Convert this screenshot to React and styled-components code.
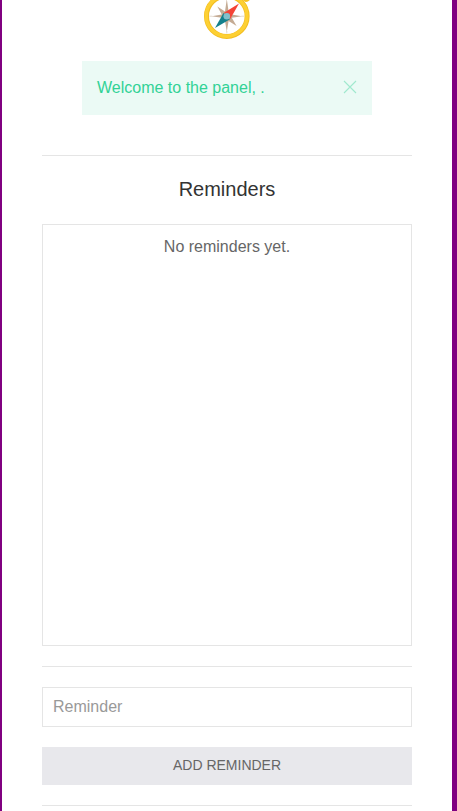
import React from "react";
import styled, { createGlobalStyle } from "styled-components";

const GlobalStyle = createGlobalStyle`
  *, *::before, *::after { box-sizing: border-box; }
  html, body { margin: 0; overflow: hidden; background: #fff; }
  body {
    font: 16px/1.5 "Liberation Sans", Arial, sans-serif;
    color: #666;
  }
`;

const Page = styled.main`
  height: 811px;
  overflow: hidden;
  padding: 0 40px;
  border: solid purple;
  border-width: 0 5px 0 2px;
  background: #fff;
`;

const Logo = styled.div`
  height: 61px;
  display: flex;
  justify-content: center;
  svg { display: block; flex: none; }
`;

const Alert = styled.div`
  display: flex;
  justify-content: space-between;
  align-items: flex-start;
  margin: 0 40px 40px;
  padding: 15px;
  background: #ebfaf5;
  color: #32d296;
`;

const CloseButton = styled.button`
  display: block;
  margin: 4px 0 0;
  padding: 0;
  border: 0;
  background: none;
  color: inherit;
  opacity: 0.4;
  svg { display: block; }
`;

const Divider = styled.hr`
  margin: 0 0 ${(p) => p.$gap ?? 20}px;
  border: 0;
  border-top: 1px solid #e5e5e5;
`;

const Title = styled.h4`
  margin: 0 0 21px;
  font-size: 20px;
  line-height: 28px;
  font-weight: 400;
  color: #333;
  text-align: center;
`;

const ReminderList = styled.section`
  height: 422px;
  margin-bottom: 20px;
  padding: 10px;
  border: 1px solid #e5e5e5;
  text-align: center;
`;

const TextInput = styled.input`
  display: block;
  width: 100%;
  height: 40px;
  margin: 0 0 20px;
  padding: 0 10px;
  border: 1px solid #e5e5e5;
  border-radius: 0;
  background: #fff;
  color: #666;
  font: inherit;
  outline: none;
  &::placeholder { color: #999; opacity: 1; }
`;

const SubmitButton = styled.button`
  display: block;
  width: 100%;
  margin: 0 0 20px;
  padding: 0 30px 2px;
  border: 0;
  background: #e8e8ec;
  color: #666;
  font: 14px/36px "Liberation Sans", Arial, sans-serif;
  text-transform: uppercase;
`;

function Compass() {
  return (
    <svg width="60" height="45" viewBox="0 0 60 45" aria-hidden="true">
      <path d="M45.5 0L48 1.8Q50.5 2.4 52.8 0Z" fill="#f5c024" />
      <circle cx="29.8" cy="16.2" r="20.3" fill="#fff" stroke="#f3bd20" strokeWidth="5" />
      <circle cx="29.6" cy="15.9" r="20.4" fill="none" stroke="#fdd033" strokeWidth="3.4" />
      <g stroke="#d9cec2" strokeWidth="0.8">
        <path d="M29.8 31V33.5M12.3 16.2H15.3M44.3 16.2H47.3" />
      </g>
      <path
        d="M29.8 -1L31.6 11.5L40 6L34.8 14.6L45 16.2L34.8 17.8L39.6 26L31.6 20.9L29.8 31.8L28 20.9L20 26L24.8 17.8L14.6 16.2L24.8 14.6L20.3 6.6L28 11.5Z"
        fill="#c4ab94"
      />
      <path d="M42 3.4L33.2 18.9L26.7 13Z" fill="#f44336" />
      <path d="M18 28L26.5 13.1L33 19.2Z" fill="#14808c" />
      <circle cx="29.8" cy="16.2" r="3.3" fill="#82bfca" />
    </svg>
  );
}

export default function App() {
  return (
    <>
      <GlobalStyle />
      <Page>
        <Logo><Compass /></Logo>
        <Alert>
          <span>Welcome to the panel, .</span>
          <CloseButton aria-label="Close">
            <svg width="14" height="14" viewBox="0 0 14 14" fill="none" stroke="currentColor" strokeWidth="1.1">
              <path d="M1 1L13 13M13 1L1 13" />
            </svg>
          </CloseButton>
        </Alert>
        <Divider $gap={19} />
        <Title>Reminders</Title>
        <ReminderList>No reminders yet.</ReminderList>
        <Divider />
        <TextInput placeholder="Reminder" />
        <SubmitButton>Add reminder</SubmitButton>
        <Divider />
      </Page>
    </>
  );
}
